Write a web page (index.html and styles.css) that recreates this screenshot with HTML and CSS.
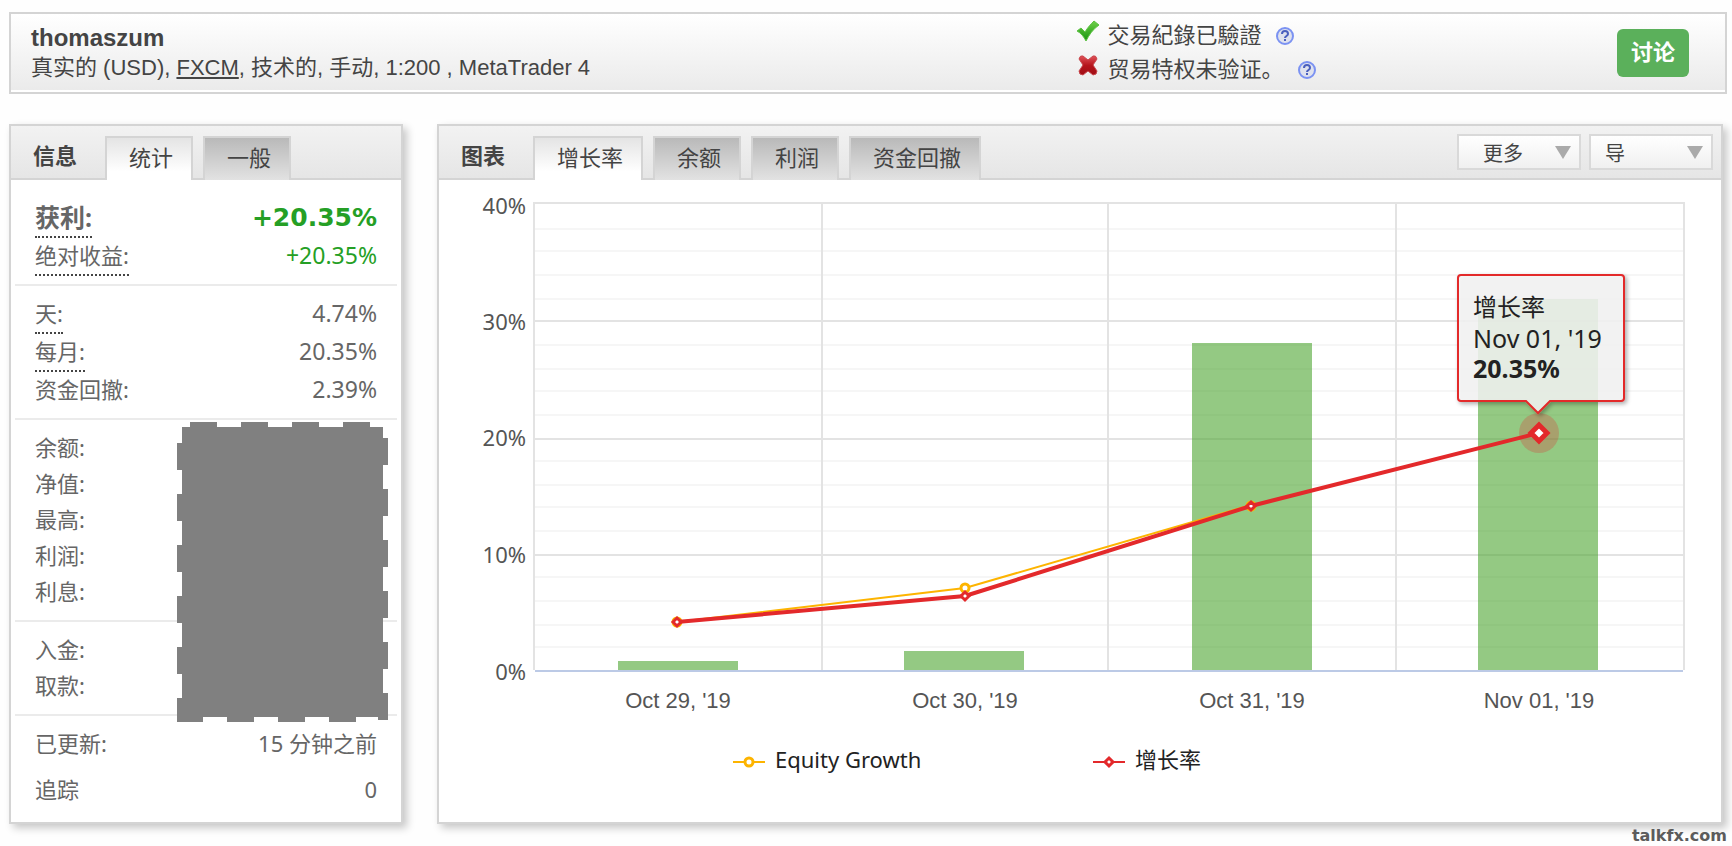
FILE: index.html
```html
<!DOCTYPE html>
<html lang="zh-CN">
<head>
<meta charset="utf-8">
<title>thomaszum</title>
<link rel="stylesheet" href="styles.css">
</head>
<body>
<header class="account">
  <div class="account-info">
    <h1 class="account-name">thomaszum</h1>
    <p class="account-meta">真实的 (USD), <a href="#fxcm">FXCM</a>, 技术的, 手动, 1:200 , MetaTrader 4</p>
  </div>
  <ul class="checks">
    <li>
      <svg class="mark" viewBox="0 0 24 24" aria-hidden="true">
        <defs>
          <linearGradient id="g-ok" x1="0" y1="0" x2="0" y2="1"><stop offset="0" stop-color="#6fd04a"/><stop offset="1" stop-color="#17930f"/></linearGradient>
          <linearGradient id="g-no" x1="0" y1="0" x2="0" y2="1"><stop offset="0" stop-color="#e2535a"/><stop offset="0.5" stop-color="#b5151c"/><stop offset="1" stop-color="#a00d14"/></linearGradient>
        </defs>
        <path d="M1 11 L5 8 L9 12 C12 7 15 4 18 1 L23 5 C17 9 13 15 10 21 C8 17 5 13 1 11 Z" fill="url(#g-ok)" stroke="#5cc242" stroke-width="1" stroke-linejoin="round"/>
      </svg>
      <span>交易紀錄已驗證</span>
      <button class="help" type="button" aria-label="?"><svg viewBox="0 0 20 20" aria-hidden="true"><circle cx="10" cy="10" r="8" fill="#dfe2ee" stroke="#7b92f2" stroke-width="2"/><path d="M7 8 C7 4 13 4 13 8 C13 10 10 10 10 12" fill="none" stroke="#4a5fbe" stroke-width="2"/><rect x="9" y="13" width="2" height="2" fill="#4a5fbe"/></svg></button>
    </li>
    <li>
      <svg class="mark" viewBox="0 0 24 24" aria-hidden="true">
        <path d="M3 5 Q4 1 7 2 L12 6 L17 2 Q20 1 21 5 L17 11 L21 17 Q21 21 17 21 L12 17 L7 21 Q3 21 3 17 L7 11 Z" fill="url(#g-no)" stroke="#c8484e" stroke-width="1" stroke-linejoin="round"/>
      </svg>
      <span>贸易特权未验证。</span>
      <button class="help" type="button" aria-label="?"><svg viewBox="0 0 20 20" aria-hidden="true"><circle cx="10" cy="10" r="8" fill="#dfe2ee" stroke="#7b92f2" stroke-width="2"/><path d="M7 8 C7 4 13 4 13 8 C13 10 10 10 10 12" fill="none" stroke="#4a5fbe" stroke-width="2"/><rect x="9" y="13" width="2" height="2" fill="#4a5fbe"/></svg></button>
    </li>
  </ul>
  <button class="discuss" type="button">讨论</button>
</header>

<main class="columns">
  <section class="panel panel-info">
    <div class="panel-head">
      <h2>信息</h2>
      <div class="tabs">
        <button class="tab tab-active" type="button">统计</button>
        <button class="tab" type="button">一般</button>
      </div>
    </div>
    <div class="stats">
      <dl class="group">
        <div class="row row-lead"><dt><span class="hint">获利:</span></dt><dd>+20.35%</dd></div>
        <div class="row row-gain"><dt><span class="hint">绝对收益:</span></dt><dd>+20.35%</dd></div>
      </dl>
      <dl class="group">
        <div class="row"><dt><span class="hint">天:</span></dt><dd>4.74%</dd></div>
        <div class="row"><dt><span class="hint">每月:</span></dt><dd>20.35%</dd></div>
        <div class="row"><dt>资金回撤:</dt><dd>2.39%</dd></div>
      </dl>
      <dl class="group">
        <div class="row"><dt>余额:</dt><dd></dd></div>
        <div class="row"><dt>净值:</dt><dd></dd></div>
        <div class="row"><dt>最高:</dt><dd></dd></div>
        <div class="row"><dt>利润:</dt><dd></dd></div>
        <div class="row"><dt>利息:</dt><dd></dd></div>
      </dl>
      <dl class="group">
        <div class="row"><dt>入金:</dt><dd></dd></div>
        <div class="row"><dt>取款:</dt><dd></dd></div>
      </dl>
      <dl class="group group-last">
        <div class="row"><dt>已更新:</dt><dd>15 分钟之前</dd></div>
        <div class="row"><dt>追踪</dt><dd>0</dd></div>
      </dl>
      <svg class="mask" width="211" height="300" viewBox="0 0 211 300" aria-hidden="true">
        <path fill="#808080" d="M5 5H206V295H5Z
          M13 0h27v5h-27z M64 0h27v5h-27z M115 0h27v5h-27z M166 0h27v5h-27z
          M0 21h5v27h-5z M0 72h5v27h-5z M0 123h5v27h-5z M0 174h5v27h-5z M0 225h5v27h-5z M0 276h5v24h-5z
          M206 16h5v27h-5z M206 67h5v27h-5z M206 118h5v27h-5z M206 169h5v27h-5z M206 220h5v27h-5z M206 271h5v27h-5z
          M5 295h21v5h-21z M50 295h27v5h-27z M101 295h27v5h-27z M152 295h27v5h-27z M201 295h5v3h-5z"/>
      </svg>
    </div>
  </section>

  <section class="panel panel-chart">
    <div class="panel-head">
      <h2>图表</h2>
      <div class="tabs">
        <button class="tab tab-active" type="button">增长率</button>
        <button class="tab" type="button">余额</button>
        <button class="tab" type="button">利润</button>
        <button class="tab" type="button">资金回撤</button>
      </div>
      <div class="menus">
        <span class="menu"><select class="menu-more" aria-label="更多"><option>更多</option></select></span>
        <span class="menu"><select aria-label="导"><option>导</option></select></span>
      </div>
    </div>
    <svg class="chart" viewBox="0 0 1282 642" role="img" aria-label="增长率">
      <defs>
        <filter id="tip-shadow" x="-10%" y="-10%" width="120%" height="125%"><feDropShadow dx="2" dy="2" stdDeviation="2" flood-color="#000" flood-opacity="0.35"/></filter>
      </defs>
      <path class="minor" d="M96 49H1244M96 71H1244M96 95H1244M96 119H1244M96 165H1244M96 189H1244M96 211H1244M96 235H1244M96 281H1244M96 305H1244M96 327H1244M96 351H1244M96 397H1244M96 421H1244M96 445H1244M96 467H1244"/>
      <path class="major" d="M94 23H1246M96 141H1244M96 259H1244M96 375H1244M95 22V490M383 24V490M669 24V490M957 24V490M1245 22V490"/>
      <path class="bars" d="M179 481H299V490H179ZM465 471H585V490H465ZM753 163H873V490H753ZM1039 119H1159V490H1039Z"/>
      <path class="axis" d="M96 491H1244"/>

      <path class="line-equity" d="M238 442L526 408L812 325"/>
      <circle class="dot-equity" cx="238" cy="442" r="4"/>
      <circle class="dot-equity" cx="526" cy="408" r="4"/>
      <circle class="dot-equity" cx="812" cy="326" r="4"/>
      <circle class="halo" cx="1100" cy="253" r="20"/>
      <path class="line-growth" d="M238 442L526 416L812 326L1100 253"/>
      <path class="dot-growth" d="M238 438l4 4l-4 4l-4 -4zM526 412l4 4l-4 4l-4 -4zM812 322l4 4l-4 4l-4 -4z"/>
      <path class="dot-big" d="M1100 245l8 8l-8 8l-8 -8z"/>

      <g class="axis-y">
        <text x="87" y="34">40%</text>
        <text x="87" y="150">30%</text>
        <text x="87" y="266">20%</text>
        <text x="87" y="383">10%</text>
        <text x="87" y="500">0%</text>
      </g>
      <g class="axis-x">
        <text x="239" y="528">Oct 29, '19</text>
        <text x="526" y="528">Oct 30, '19</text>
        <text x="813" y="528">Oct 31, '19</text>
        <text x="1100" y="528">Nov 01, '19</text>
      </g>

      <g class="legend">
        <path class="line-equity" d="M294 582H326"/>
        <circle class="dot-equity" cx="310" cy="582" r="4"/>
        <text x="336" y="588">Equity Growth</text>
        <path class="key-growth" d="M654 582H686"/>
        <path class="dot-growth" d="M670 578l4 4l-4 4l-4 -4z"/>
        <text x="696" y="588">增长率</text>
      </g>

      <g class="tip">
        <path d="M1022 95H1182Q1185 95 1185 98V218Q1185 221 1182 221H1111L1099 233L1087 221H1022Q1019 221 1019 218V98Q1019 95 1022 95Z" filter="url(#tip-shadow)"/>
        <text x="1034" y="136">增长率</text>
        <text class="tip-date" x="1034" y="168">Nov 01, '19</text>
        <text class="tip-value" x="1034" y="198">20.35%</text>
      </g>
    </svg>
  </section>
</main>
<footer class="source">talkfx.com</footer>
</body>
</html>
```

FILE: styles.css
```css
* { box-sizing: border-box; }

body {
  margin: 0;
  padding: 12px 5px 0 9px;
  background: #fefefe;
  color: #444;
  font: 22px/36px "Noto Sans", "Noto Sans CJK SC", sans-serif;
}

h1, h2, p, ul, dl, dd { margin: 0; padding: 0; }
button, select { font: inherit; color: inherit; }

.account {
  display: flex;
  align-items: center;
  height: 82px;
  padding: 0 36px 0 20px;
  border: 2px solid #d4d4d4;
  background: linear-gradient(#fff, #eaeaea);
  box-shadow: inset 0 -2px #fff;
  font-family: "Liberation Sans", "Noto Sans CJK SC", sans-serif;
}
.account-info { flex: 0 0 63%; }
.account-name { font-size: 24px; line-height: 30px; }
.account-meta { line-height: 30px; white-space: nowrap; }
.account-meta a { color: inherit; }

.checks { flex: 1; list-style: none; }
.checks li { display: flex; align-items: center; gap: 8px; height: 34px; }
.mark { width: 24px; height: 24px; margin-bottom: 8px; }
.help {
  display: flex;
  margin-left: 5px;
  padding: 0;
  border: 0;
  background: none;
}
.help svg { width: 20px; height: 20px; }

.discuss {
  width: 72px;
  height: 48px;
  padding: 0;
  border: 0;
  border-radius: 6px;
  background: #5bb05b;
  color: #fff;
  font-weight: bold;
}

.columns { display: flex; gap: 34px; margin: 30px 4px 0 0; }
.panel {
  border: 2px solid #d4d4d4;
  background: #fff;
  box-shadow: 4px 4px 8px rgba(0, 0, 0, 0.22);
}
.panel-info { flex: 0 0 394px; }
.panel-chart { flex: 1; min-width: 0; }

.panel-head {
  display: flex;
  align-items: flex-end;
  height: 54px;
  background: linear-gradient(#f2f2f2, #e5e5e5);
  box-shadow: inset 0 -2px #d4d4d4;
}
.panel-head h2 {
  flex: 0 0 94px;
  padding: 0 0 7px 22px;
  font-size: 22px;
  line-height: 36px;
}
.tabs { display: flex; gap: 10px; }
.tab {
  height: 44px;
  padding: 0 18px 4px 22px;
  border: 2px solid #d4d4d4;
  border-bottom: 0;
  background: linear-gradient(#b9b9b9, #e2e2e2);
  line-height: 36px;
}
.tab-active { background: linear-gradient(#e4e4e4, #fff 80%); }

.menus { display: flex; gap: 8px; margin: 0 8px 10px auto; }
.menu { position: relative; }
.menu select {
  display: block;
  width: 124px;
  height: 36px;
  padding: 0 14px;
  border: 2px solid #d9d9d9;
  border-radius: 0;
  background: linear-gradient(#fff, #f0f0f0);
  font-size: 20px;
  appearance: none;
}
.menu .menu-more { padding-left: 24px; }
.menu::after {
  content: "";
  position: absolute;
  top: 12px;
  right: 10px;
  border: 8px solid transparent;
  border-top: 13px solid #aaa;
  border-bottom: 0;
  pointer-events: none;
}

.stats { position: relative; padding-top: 10px; color: #666; }
.group { margin: 0 4px; padding: 10px 20px; border-bottom: 2px solid #ebebeb; }
.group:first-child { padding-bottom: 8px; }
.row {
  display: flex;
  justify-content: space-between;
  min-height: 36px;
  line-height: 34px;
}
.row dd { font-size: 23px; }
.hint {
  display: inline-block;
  padding-bottom: 2px;
  border-bottom: 2px dotted #444;
  vertical-align: top;
}
.row-lead { font-weight: bold; font-size: 25px; }
.row-lead dd { font: bold 25px/36px "DejaVu Sans", sans-serif; }
.row-lead dd, .row-gain dd { color: #259f25; }
.group-last { display: grid; gap: 10px; padding-bottom: 14px; border-bottom: 0; }
.group-last dd { font-size: 22px; }
.mask { position: absolute; top: 242px; right: 13px; }

.chart { display: block; width: 100%; height: auto; font: 22px "Noto Sans", "Noto Sans CJK SC", sans-serif; }
.minor, .major, .axis { fill: none; stroke: #f6f6f6; stroke-width: 2; }
.major { stroke: #e3e3e3; }
.axis { stroke: #bccae6; }
.bars { fill: #4da530; fill-opacity: 0.6; }
.line-equity { fill: none; stroke: #fdb400; stroke-width: 2; }
.line-growth { fill: none; stroke: #e3292b; stroke-width: 4; }
.key-growth { stroke: #e3292b; stroke-width: 2; }
.dot-equity { fill: #fff; stroke: #fdb400; stroke-width: 3; }
.dot-growth { fill: #fff; stroke: #e3292b; stroke-width: 3; }
.dot-big { fill: #fff; stroke: #e3292b; stroke-width: 5; }
.halo { fill: #e3292b; fill-opacity: 0.25; }
.axis-y { fill: #555; text-anchor: end; }
.axis-x { fill: #555; text-anchor: middle; font-family: "Liberation Sans", sans-serif; }
.legend { fill: #222; }
.tip { fill: #222; font-size: 24px; }
.tip path { fill: #f7f7f7; fill-opacity: 0.83; stroke: #e3292b; stroke-width: 2; }
.tip-date, .tip-value { font-size: 25px; }
.tip-value { font-weight: bold; }

.source {
  margin-top: 4px;
  color: #5c5c5c;
  font: bold 16px/16px "DejaVu Sans", sans-serif;
  text-align: right;
}
```
